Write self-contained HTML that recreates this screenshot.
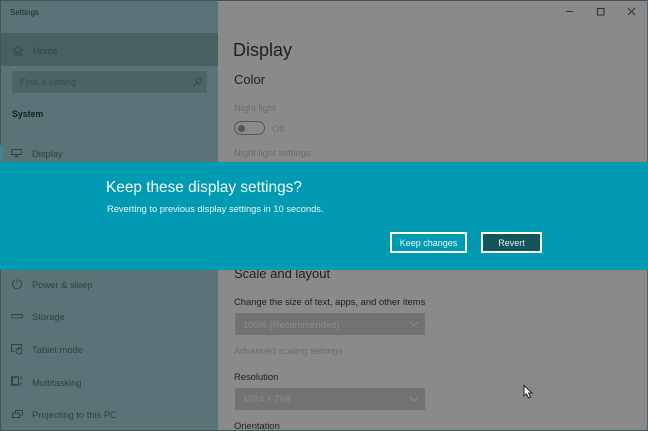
<!DOCTYPE html>
<html>
<head>
<meta charset="utf-8">
<style>
html,body{margin:0;padding:0;width:648px;height:431px;overflow:hidden;background:#8a8a8a}
body{position:relative;font-family:"Liberation Sans",sans-serif}
#w{position:absolute;left:0;top:0;width:648px;height:431px;overflow:hidden;filter:blur(.3px)}
.a{position:absolute;white-space:nowrap}
.nav{color:#2f4244;font-size:9.4px;left:32px;line-height:14px}
.t{font-size:9.4px;line-height:14px}
svg{position:absolute;overflow:visible}
</style>
</head>
<body>
<div id="w">
<div class="a" style="left:0;top:0;width:648px;height:431px;background:#8a8a8a"></div>
<div class="a" style="left:0;top:0;width:218px;height:431px;background:#5a7376"></div>
<div class="a" style="left:0;top:33px;width:218px;height:33px;background:#4a5f61"></div>
<div class="a" style="left:0;top:0;width:648px;height:1px;background:#3f5557"></div>
<div class="a" style="left:0;top:0;width:1px;height:431px;background:#3f5557"></div>
<div class="a" style="left:647px;top:0;width:1px;height:431px;background:#4f6568"></div>
<div class="a" style="left:0;top:430px;width:648px;height:1px;background:#3f5557"></div>

<div class="a" style="left:10px;top:6px;font-size:8px;line-height:13px;color:#1c2a2b">Settings</div>

<svg style="left:13px;top:46px" width="10" height="9" fill="none" stroke="#2f4244" stroke-width=".9"><path d="M0 4.5 L5 0 L10 4.5 M1.8 3.2 V9 H4 V6 H6 V9 H8.2 V3.2"/></svg>
<div class="a nav" style="left:33px;top:44px">Home</div>

<div class="a" style="left:12px;top:71px;width:195px;height:22px;background:#4d6466;border:1px solid #506769;box-sizing:border-box"></div>
<div class="a t" style="left:20px;top:75px;color:#39494b">Find a setting</div>
<svg style="left:193px;top:78px" width="9" height="8" fill="none" stroke="#2f4244" stroke-width=".9"><circle cx="5.7" cy="2.8" r="2.7"/><path d="M3.7 4.8 L.5 8"/></svg>

<div class="a" style="left:12px;top:107px;font-size:8.8px;font-weight:bold;line-height:14px;color:#14201f">System</div>

<div class="a" style="left:0;top:145px;width:3px;height:17px;background:#3d8791"></div>
<svg style="left:11px;top:149px" width="11" height="8" fill="none" stroke="#2f4244" stroke-width=".9"><path d="M.5 .5 H10.5 V5.5 H.5 Z M5.5 5.5 V7.5 M3 7.7 H8"/></svg>
<div class="a nav" style="top:147px">Display</div>

<svg style="left:12px;top:279px" width="10" height="10" fill="none" stroke="#2f4244" stroke-width=".9"><path d="M3 1.3 A4.5 4.5 0 1 0 7 1.3 M5 0 V4.5"/></svg>
<div class="a nav" style="top:278px">Power &amp; sleep</div>

<svg style="left:11px;top:314px" width="12" height="4" fill="none" stroke="#2f4244" stroke-width=".9"><rect x=".5" y=".5" width="11" height="3.4" rx="1"/></svg>
<div class="a nav" style="top:310px">Storage</div>

<svg style="left:11px;top:344px" width="12" height="10" fill="none" stroke="#2f4244" stroke-width=".9"><path d="M3.5 7.5 H.5 V.5 H10.5 V4"/><circle cx="8" cy="7" r="3"/><path d="M7.5 3 V6"/></svg>
<div class="a nav" style="top:343px">Tablet mode</div>

<svg style="left:11px;top:376px" width="11" height="10" fill="none" stroke="#2f4244" stroke-width=".9"><path d="M1.5 1.5 H7.5 V8.5 H1.5 Z M.5 0 V10 M.5 .8 H8 M.5 9.2 H8 M10 0 V4 M10 6 V10"/></svg>
<div class="a nav" style="top:376px">Multitasking</div>

<svg style="left:12px;top:410px" width="11" height="8" fill="none" stroke="#2f4244" stroke-width=".9"><path d="M3.5 2.5 V.5 H10.5 V5 H7.5 M.5 3 H7.5 V7.5 H.5 Z"/></svg>
<div class="a nav" style="top:408px">Projecting to this PC</div>

<svg style="left:560px;top:0" width="88" height="24" fill="none" stroke="#333" stroke-width="1"><path d="M6 11.5 H13"/><rect x="37.5" y="8.5" width="6.5" height="6.5" stroke-width="1.1"/><path d="M68 8 L75 15 M75 8 L68 15"/></svg>

<div class="a" style="left:233px;top:38px;font-size:18px;line-height:25px;color:#1f1f1f">Display</div>
<div class="a" style="left:234px;top:71px;font-size:13px;line-height:18px;color:#1f1f1f">Color</div>
<div class="a t" style="left:234px;top:101px;color:#6b6b6b">Night light</div>
<div class="a" style="left:234px;top:121px;width:31px;height:14px;border:1px solid #555;border-radius:7px;box-sizing:border-box"></div>
<div class="a" style="left:238px;top:125px;width:7px;height:7px;border-radius:50%;background:#555"></div>
<div class="a t" style="left:272px;top:122px;color:#6b6b6b">Off</div>
<div class="a t" style="left:234px;top:146px;color:#6b6b6b">Night light settings</div>

<div class="a" style="left:234px;top:265px;font-size:13px;line-height:18px;color:#1f1f1f">Scale and layout</div>
<div class="a t" style="left:234px;top:295px;color:#1f1f1f">Change the size of text, apps, and other items</div>
<div class="a" style="left:235px;top:313px;width:190px;height:22px;background:#727272"></div>
<div class="a t" style="left:243px;top:318px;color:#8d8d8d">100% (Recommended)</div>
<svg style="left:410px;top:322px" width="8" height="5" fill="none" stroke="#8d8d8d" stroke-width=".9"><path d="M0 0 L4 4 L8 0"/></svg>
<div class="a t" style="left:234px;top:344px;color:#6b6b6b">Advanced scaling settings</div>
<div class="a t" style="left:234px;top:370px;color:#1f1f1f">Resolution</div>
<div class="a" style="left:235px;top:388px;width:190px;height:22px;background:#727272"></div>
<div class="a t" style="left:243px;top:392px;color:#8d8d8d">1024 × 768</div>
<svg style="left:410px;top:397px" width="8" height="5" fill="none" stroke="#8d8d8d" stroke-width=".9"><path d="M0 0 L4 4 L8 0"/></svg>
<div class="a t" style="left:234px;top:419px;color:#1f1f1f">Orientation</div>

<div class="a" style="left:0;top:162px;width:648px;height:108px;background:#009bb2"></div>
<div class="a" style="left:106px;top:177px;font-size:15.4px;line-height:22px;color:#f2fbfc">Keep these display settings?</div>
<div class="a" style="left:107px;top:203px;font-size:9.3px;line-height:13px;color:#eaf8fa">Reverting to previous display settings in 10 seconds.</div>
<div class="a" style="left:390px;top:232px;width:77px;height:21px;border:2px solid #fff;box-sizing:border-box;color:#eaf8fa;font-size:9px;line-height:19px;text-align:center">Keep changes</div>
<div class="a" style="left:481px;top:232px;width:61px;height:21px;border:2px solid #fff;box-sizing:border-box;background:#14545a;color:#e4efef;font-size:9px;line-height:19px;text-align:center">Revert</div>

<svg style="left:523px;top:385px" width="11" height="14"><path d="M1 .5 V11 L3.5 8.8 L5.5 13 L7.5 12 L5.6 8 H9 Z" fill="#fff" stroke="#222" stroke-width="1"/></svg>
</div>
</body>
</html>
